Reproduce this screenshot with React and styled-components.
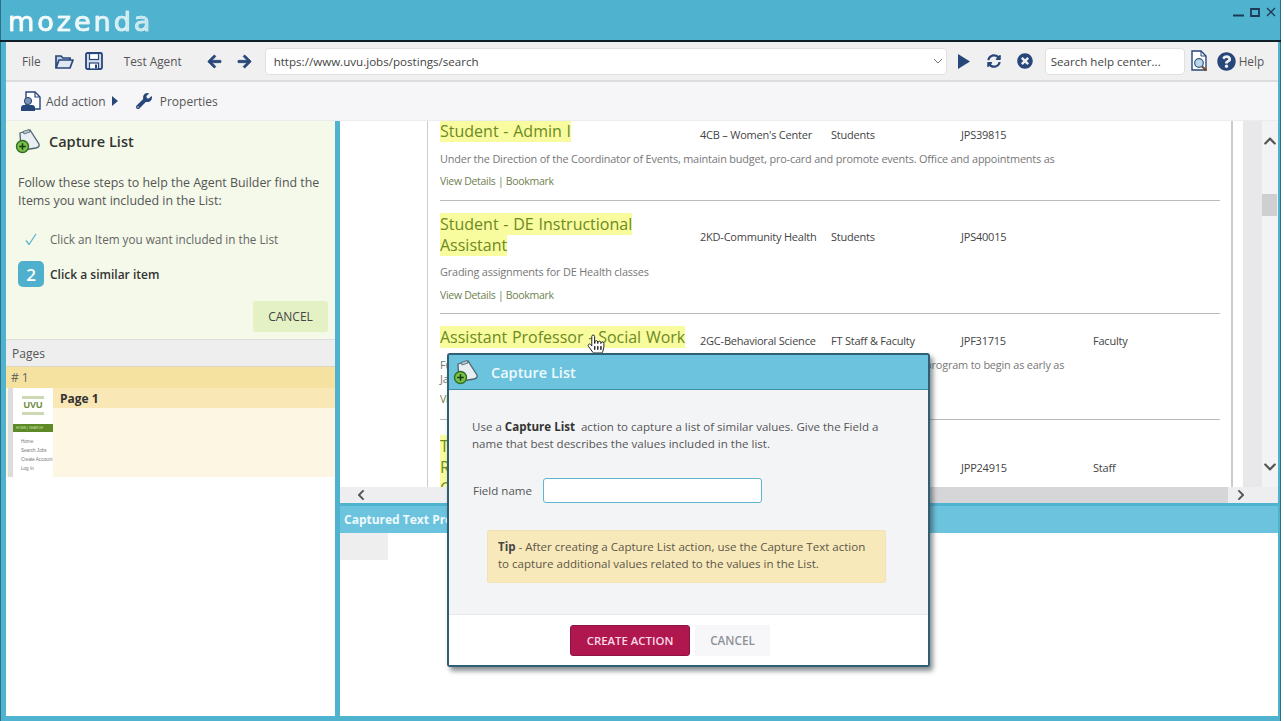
import React from 'react';
import styled, { createGlobalStyle } from 'styled-components';
import {
  FaArrowLeft, FaArrowRight, FaSyncAlt, FaTimesCircle,
  FaQuestionCircle, FaWrench, FaChevronUp, FaChevronDown, FaChevronLeft, FaChevronRight,
  FaHandPointer,
} from 'react-icons/fa';

const UI_FONT = `"Open Sans", "Noto Sans", sans-serif`;
const NAVY = '#27477a';

const Global = createGlobalStyle`
  html, body { margin: 0; padding: 0; background: #fff; }
  * { box-sizing: border-box; }
  body { font-family: ${UI_FONT}; }
`;

const Page = styled.div`
  width: 1284px;
  height: 721px;
  background: #fff;
`;

const Frame = styled.div`
  position: relative;
  width: 1281px;
  height: 721px;
  overflow: hidden;
  display: flex;
  flex-direction: column;
  padding: 0 3px 5px 6px;
  background: #4fb3cf;
  box-shadow: inset 1px 0 0 #2d6f86, inset -1px 0 0 #2d6f86;
  color: #444;
`;

const TitleBar = styled.div`
  flex: none;
  height: 42px;
  margin: 0 -3px 0 -6px;
  display: flex;
  align-items: flex-start;
  justify-content: space-between;
  padding: 5px 5px 0 8px;
  border-bottom: 2px solid #10202a;
`;

const Logo = styled.div`
  font: 400 27px "DejaVu Sans", sans-serif;
  letter-spacing: 3px;
  line-height: 34px;
  background: linear-gradient(90deg, #ffffff 0%, #e8f7fa 55%, #b5e0ea 100%);
  -webkit-background-clip: text;
  background-clip: text;
  color: transparent;
  -webkit-text-stroke: 0.7px rgba(255, 255, 255, 0.6);
`;

const WinControls = styled.div`
  display: flex;
  align-items: center;
  gap: 6px;
  height: 14px;
  color: #1d3a57;
`;

const Toolbar = styled.div`
  flex: none;
  height: 40px;
  display: flex;
  align-items: center;
  padding-left: 16px;
  background: #f0f0f1;
  border-bottom: 2px solid #dcdcdc;
  font-size: 11.8px;
`;

const ToolLabel = styled.span`
  margin-left: ${p => p.$left || 0}px;
  color: ${p => p.$color || '#555'};
  white-space: nowrap;
`;

const ToolIcon = styled.span`
  display: inline-flex;
  color: ${NAVY};
  margin-left: ${p => p.$left || 0}px;
  font-size: ${p => p.$size || 18}px;
`;

const ArrowIcon = styled(ToolIcon)`
  svg { stroke: currentColor; stroke-width: 25px; }
`;

const Field = styled.div`
  flex: none;
  width: ${p => p.$width}px;
  height: 27px;
  margin-left: ${p => p.$left}px;
  display: flex;
  align-items: center;
  justify-content: space-between;
  padding: 0 3px 0 ${p => p.$pad}px;
  background: #fff;
  border: 1px solid #e0e0e0;
  border-radius: 4px;
  font-size: 11.6px;
  color: #444;
`;

const ActionBar = styled.div`
  flex: none;
  height: 39px;
  display: flex;
  align-items: center;
  padding-left: 15px;
  background: #f6f6f8;
  font-size: 12px;
  color: #555;
  border-bottom: 1px solid #ececec;
`;

const Body = styled.div`
  flex: 1;
  min-height: 0;
  display: flex;
`;

const LeftColumn = styled.div`
  flex: none;
  width: 329px;
  display: flex;
  flex-direction: column;
  background: #fff;
`;

const Splitter = styled.div`
  flex: none;
  width: 5px;
  background: #4fb3cf;
`;

const GuidePanel = styled.div`
  flex: none;
  height: 218px;
  padding: 7px 7px 0 12px;
  background: #f4f9e9;
  display: flex;
  flex-direction: column;
`;

const GuideTitle = styled.div`
  display: flex;
  align-items: center;
  gap: 8px;
  margin-left: -3px;
  font-size: 14.5px;
  font-weight: 600;
  color: #333;
  height: 26px;
`;

const GuideText = styled.p`
  margin: 20px 0 0;
  font-size: 12.4px;
  line-height: 18px;
  color: #555;
`;

const Step = styled.div`
  display: flex;
  align-items: center;
  height: ${p => p.$height}px;
  margin-top: ${p => p.$top}px;
  font-size: ${p => (p.$bold ? 12 : 11.7)}px;
  color: ${p => (p.$bold ? '#333' : '#666')};
  font-weight: ${p => (p.$bold ? 600 : 400)};
`;

const StepMark = styled.span`
  flex: none;
  width: 26px;
  height: 26px;
  margin-right: 6px;
  display: flex;
  align-items: center;
  justify-content: center;
  border-radius: 5px;
  font-size: 17px;
  font-weight: 600;
  color: ${p => (p.$done ? '#5bb5cf' : '#fff')};
  background: ${p => (p.$done ? 'transparent' : '#4fb0cd')};
`;

const GuideCancel = styled.button`
  align-self: flex-end;
  margin-top: 14px;
  width: 75px;
  height: 31px;
  border: 0;
  border-radius: 3px;
  background: #e3f1c4;
  font: 500 12px ${UI_FONT};
  color: #444;
`;

const PagesHeader = styled.div`
  flex: none;
  height: 28px;
  display: flex;
  align-items: center;
  padding-left: 6px;
  background: #eeeeef;
  border-top: 1px solid #ddd;
  border-bottom: 1px solid #dfd8c0;
  font-size: 12px;
  color: #555;
`;

const GroupRow = styled.div`
  flex: none;
  height: 21px;
  display: flex;
  align-items: center;
  padding-left: 5px;
  background: #f6e2a0;
  font-size: 12px;
  color: #666;
`;

const PageRow = styled.div`
  flex: none;
  height: 89px;
  display: flex;
  background: #fdf6e3;
  padding-left: 2px;
`;

const Thumb = styled.div`
  flex: none;
  width: 45px;
  display: flex;
  flex-direction: column;
  background: #fff;
  border-left: 5px solid #dcdcdc;
  overflow: hidden;
`;

const ThumbLogo = styled.div`
  width: 22px;
  height: 20px;
  margin: 8px 0 0 9px;
  padding-top: 4px;
  font: 700 9px/10px "Liberation Sans", sans-serif;
  color: #6d8b3e;
  text-align: center;
  background: linear-gradient(#cdd8b4 0 3px, transparent 3px 16px, #cdd8b4 16px 19px, transparent 19px);
`;

const ThumbNav = styled.div`
  margin-top: 8px;
  height: 8px;
  background: #5d8a27;
  color: #cfe3ad;
  font: 3.4px/8px "Liberation Sans", sans-serif;
  padding-left: 3px;
  white-space: nowrap;
`;

const ThumbLinks = styled.div`
  margin: 5px 0 0 8px;
  font: 4.6px/9px "Liberation Sans", sans-serif;
  color: #777;
  white-space: nowrap;
`;

const PageName = styled.div`
  flex: 1;
  height: 20px;
  display: flex;
  align-items: center;
  padding-left: 7px;
  background: #f9e8b6;
  font-size: 12px;
  font-weight: 700;
  color: #333;
`;

const RightColumn = styled.div`
  flex: 1;
  min-width: 0;
  display: flex;
  flex-direction: column;
  background: #fff;
`;

const BrowserRow = styled.div`
  flex: none;
  height: 366px;
  display: flex;
`;

const Viewport = styled.div`
  flex: 1;
  min-width: 0;
  overflow: hidden;
`;

const JobList = styled.div`
  width: 806px;
  height: 366px;
  margin-left: 87px;
  padding: 0 11px 0 12px;
  border-left: 1px solid #ccc;
  border-right: 2px solid #ccc;
  overflow: hidden;
`;

const Job = styled.div`
  height: ${p => p.$height}px;
  padding-top: ${p => p.$pad}px;
  border-bottom: 1px solid #bbb;
  &:last-child { border-bottom: 0; }
`;

const JobHead = styled.div`
  display: grid;
  grid-template-columns: 260px 131px 130px 132px 1fr;
  align-items: center;
  font-size: 11px;
  letter-spacing: -0.22px;
  color: #444;
  > div + div { padding-top: ${p => p.$metaOffset ?? 5}px; }
`;

const JobTitle = styled.div`
  font-size: 16px;
  word-spacing: 0.6px;
  letter-spacing: 0;
  line-height: 21px;
  color: #6c8a22;
  white-space: ${p => (p.$nowrap ? 'nowrap' : 'normal')};
  span {
    background: #f9fb9f;
    box-decoration-break: clone;
    -webkit-box-decoration-break: clone;
  }
`;

const JobDesc = styled.div`
  margin-top: ${p => p.$top}px;
  font-size: 10.9px;
  letter-spacing: -0.18px;
  line-height: ${p => p.$line || 17}px;
  color: #777;
  white-space: nowrap;
`;

const JobLinks = styled.div`
  margin-top: ${p => p.$top}px;
  font-size: 10.5px;
  letter-spacing: -0.3px;
  line-height: 15px;
  color: #6f7f50;
`;

const VScroll = styled.div`
  flex: none;
  width: 35px;
  display: flex;
  flex-direction: column;
  align-items: flex-end;
  margin-left: 10px;
  background: linear-gradient(90deg, #e8e8ea 0 19px, #f3f3f5 19px);
  color: #555;
  font-size: 14px;
  padding: 13px 1px 0 0;
`;

const VThumb = styled.div`
  width: 15px;
  height: 22px;
  margin-top: 46px;
  background: #cfcfd2;
`;

const VDown = styled.div`
  margin-top: auto;
  padding-bottom: 13px;
  display: flex;
`;

const HScroll = styled.div`
  flex: none;
  height: 16px;
  display: flex;
  align-items: center;
  padding: 0 31px 0 15px;
  background: #eeeef0;
  color: #555;
  font-size: 12px;
`;

const HThumb = styled.div`
  flex: 1;
  align-self: stretch;
  margin: 0 7px 0 110px;
  background: #d6d6d8;
`;

const PreviewBar = styled.div`
  flex: none;
  height: 30px;
  padding-left: 4px;
  display: flex;
  align-items: center;
  background: #6cc3de;
  border-top: 3px solid #4fb3cf;
  font-size: 12px;
  font-weight: 700;
  color: #eef9fc;
`;

const PreviewCell = styled.div`
  width: 48px;
  height: 27px;
  background: #eeeeef;
`;

const Modal = styled.div`
  position: absolute;
  left: 447px;
  top: 353px;
  width: 483px;
  height: 314px;
  display: flex;
  flex-direction: column;
  background: #f3f4f6;
  border: 2px solid #2f5f72;
  border-radius: 3px;
  box-shadow: 3px 4px 5px rgba(40, 50, 55, 0.55);
`;

const ModalHead = styled.div`
  flex: none;
  height: 35px;
  display: flex;
  align-items: center;
  gap: 12px;
  padding-left: 4px;
  background: #6cc3de;
  border-bottom: 1px solid #3f8ea8;
  font-size: 14.5px;
  font-weight: 600;
  color: #eefafd;
`;

const ModalBody = styled.div`
  flex: 1;
  padding: 28px 23px 0;
  font-size: 11.55px;
  line-height: 17px;
  color: #555;
  b { color: #333; font-weight: 700; }
`;

const FieldRow = styled.div`
  display: flex;
  align-items: center;
  gap: 11px;
  margin: 26px 0 0 1px;
`;

const FieldInput = styled.input`
  width: 219px;
  height: 25px;
  border: 1px solid #5fb4cf;
  border-radius: 3px;
  background: #fff;
  outline: 0;
`;

const Tip = styled.div`
  margin: 27px 19px 0 15px;
  height: 53px;
  padding: 7px 6px 7px 10px;
  background: #f8e9ba;
  border: 1px solid #f2e3b4;
  border-radius: 2px;
  color: #5b5648;
  b { color: #444; }
`;

const ModalFoot = styled.div`
  flex: none;
  height: 51px;
  display: flex;
  align-items: center;
  padding: 0 0 0 121px;
  gap: 5px;
  background: #fff;
  border-top: 1px solid #e8e8e8;
`;

const PrimaryButton = styled.button`
  width: 120px;
  height: 31px;
  border: 1px solid #8e1347;
  border-radius: 3px;
  background: #b0174f;
  color: #fbd9e6;
  font: 600 11.4px ${UI_FONT};
`;

const GhostButton = styled.button`
  width: 75px;
  height: 31px;
  border: 0;
  background: #f7f7f9;
  color: #8d9198;
  font: 600 11.7px ${UI_FONT};
`;

const Cursor = styled.div`
  position: absolute;
  left: 587px;
  top: 335px;
  color: #fff;
  font-size: 18px;
  display: flex;
  svg { stroke: #222; stroke-width: 28px; overflow: visible; }
`;

const CaptureIcon = ({ size = 26 }) => (
  <svg width={size} height={size} viewBox="0 0 26 26">
    <path d="M5 5 L15 2 L24 16 Q25 19 21 20 L9 22 Q5 16 5 5Z" fill="#e8eef2" stroke="#4d6470" strokeWidth="1.3" />
    <path d="M8 3.5 L14 1.5 L15 4 L9 6Z" fill="#b9c6cc" stroke="#4d6470" strokeWidth="0.8" />
    <circle cx="7.5" cy="18.5" r="6" fill="#7cc04a" stroke="#2f6d22" strokeWidth="1.4" />
    <path d="M7.5 15.2v6.6M4.2 18.5h6.6" stroke="#123d12" strokeWidth="1.5" />
  </svg>
);

const AddActionIcon = () => (
  <svg width="20" height="20" viewBox="0 0 20 20">
    <path d="M5 1h9l5 5v12H5z" fill="#fff" stroke={NAVY} strokeWidth="1.4" />
    <path d="M14 1v5h5" fill="none" stroke={NAVY} strokeWidth="1.2" />
    <circle cx="7" cy="10" r="3.6" fill="#7d93b5" stroke={NAVY} />
    <path d="M0 20v-3q0-3 3-3h8q3 0 3 3v3z" fill={NAVY} />
  </svg>
);

const PageSearchIcon = () => (
  <svg width="17" height="22" viewBox="0 0 17 22">
    <path d="M1 1h9l5 5v14H1z" fill="#fff" stroke={NAVY} strokeWidth="1.4" />
    <path d="M10 1v5h5" fill="none" stroke={NAVY} />
    <circle cx="8" cy="13" r="4.3" fill="#bcd7ea" stroke="#35557f" strokeWidth="1.2" />
    <path d="M11 16.5l4.5 4" stroke="#7a4a1e" strokeWidth="2.2" />
  </svg>
);

const FolderIcon = () => (
  <svg width="19" height="15" viewBox="0 0 19 15">
    <path d="M1 14V2h5l2 2h7v2" fill="#c6d3e6" stroke={NAVY} strokeWidth="1.7" />
    <path d="M1 14l3-8h14l-3 8z" fill="#dfe7f2" stroke={NAVY} strokeWidth="1.7" strokeLinejoin="round" />
  </svg>
);

const FloppyIcon = () => (
  <svg width="18" height="18" viewBox="0 0 18 18">
    <rect x="1" y="1" width="16" height="16" rx="1.5" fill="#d5deec" stroke={NAVY} strokeWidth="1.8" />
    <rect x="4.5" y="1.5" width="9" height="6" fill="#fff" stroke={NAVY} strokeWidth="1.2" />
    <rect x="4.5" y="11" width="9" height="6" fill="#fff" stroke={NAVY} strokeWidth="1.2" />
    <rect x="10" y="12.5" width="2" height="4" fill={NAVY} />
  </svg>
);

const CheckIcon = () => (
  <svg width="12" height="13" viewBox="0 0 12 13">
    <path d="M1 7.5l3 4L11 1" fill="none" stroke="currentColor" strokeWidth="1.3" />
  </svg>
);

const App = () => (
  <Page>
    <Global />
    <Frame>
      <TitleBar>
        <Logo>mozenda</Logo>
        <WinControls>
          <svg width="11" height="10" viewBox="0 0 11 10"><path d="M0 8.5h11" stroke="currentColor" strokeWidth="2" /></svg>
          <svg width="10" height="10" viewBox="0 0 10 10"><path d="M1 2h8v7H1z" fill="none" stroke="currentColor" strokeWidth="1.8" /></svg>
          <svg width="10" height="10" viewBox="0 0 10 10"><path d="M1 1l8 8M9 1l-8 8" stroke="currentColor" strokeWidth="1.3" /></svg>
        </WinControls>
      </TitleBar>

      <Toolbar>
        <ToolLabel>File</ToolLabel>
        <ToolIcon $left={14}><FolderIcon /></ToolIcon>
        <ToolIcon $left={11}><FloppyIcon /></ToolIcon>
        <ToolLabel $left={21}>Test Agent</ToolLabel>
        <ArrowIcon $left={25} $size={15}><FaArrowLeft /></ArrowIcon>
        <ArrowIcon $left={15} $size={15}><FaArrowRight /></ArrowIcon>
        <Field $width={682} $left={13} $pad={8}>
          https://www.uvu.jobs/postings/search
          <svg width="10" height="6" viewBox="0 0 10 6"><path d="M1 1l4 4 4-4" fill="none" stroke="#777" /></svg>
        </Field>
        <ToolIcon $left={11} $size={14}>
          <svg width="12" height="15" viewBox="0 0 12 15"><path d="M0 0l12 7.5L0 15z" fill="currentColor" /></svg>
        </ToolIcon>
        <ToolIcon $left={17} $size={14}><FaSyncAlt /></ToolIcon>
        <ToolIcon $left={16} $size={16}><FaTimesCircle /></ToolIcon>
        <Field $width={140} $left={12} $pad={5}>Search help center...</Field>
        <ToolIcon $left={6}><PageSearchIcon /></ToolIcon>
        <ToolIcon $left={9} $size={19}><FaQuestionCircle /></ToolIcon>
        <ToolLabel $left={3}>Help</ToolLabel>
      </Toolbar>

      <ActionBar>
        <AddActionIcon />
        <ToolLabel $left={5}>Add action</ToolLabel>
        <ToolIcon $left={6}>
          <svg width="6" height="10" viewBox="0 0 6 10"><path d="M0 0l6 5-6 5z" fill="currentColor" /></svg>
        </ToolIcon>
        <ToolIcon $left={18} $size={16}><FaWrench /></ToolIcon>
        <ToolLabel $left={8}>Properties</ToolLabel>
      </ActionBar>

      <Body>
        <LeftColumn>
          <GuidePanel>
            <GuideTitle><CaptureIcon />Capture List</GuideTitle>
            <GuideText>Follow these steps to help the Agent Builder find the Items you want included in the List:</GuideText>
            <Step $height={20} $top={19}>
              <StepMark $done><CheckIcon /></StepMark>
              Click an Item you want included in the List
            </Step>
            <Step $height={26} $top={12} $bold>
              <StepMark>2</StepMark>
              Click a similar item
            </Step>
            <GuideCancel>CANCEL</GuideCancel>
          </GuidePanel>
          <PagesHeader>Pages</PagesHeader>
          <GroupRow># 1</GroupRow>
          <PageRow>
            <Thumb>
              <ThumbLogo>UVU</ThumbLogo>
              <ThumbNav>HOME | SEARCH</ThumbNav>
              <ThumbLinks>
                <div>Home</div>
                <div>Search Jobs</div>
                <div>Create Account</div>
                <div>Log In</div>
              </ThumbLinks>
            </Thumb>
            <PageName>Page 1</PageName>
          </PageRow>
        </LeftColumn>
        <Splitter />
        <RightColumn>
          <BrowserRow>
            <Viewport>
              <JobList>
                <Job $height={80} $pad={0}>
                  <JobHead>
                    <JobTitle><span>Student - Admin I</span></JobTitle>
                    <div>4CB – Women's Center</div>
                    <div>Students</div>
                    <div>JPS39815</div>
                    <div />
                  </JobHead>
                  <JobDesc $top={8}>Under the Direction of the Coordinator of Events, maintain budget, pro-card and promote events. Office and appointments as</JobDesc>
                  <JobLinks $top={7}>View Details | Bookmark</JobLinks>
                </Job>
                <Job $height={113} $pad={13}>
                  <JobHead $metaOffset={3}>
                    <JobTitle><span>Student - DE Instructional Assistant</span></JobTitle>
                    <div>2KD-Community Health</div>
                    <div>Students</div>
                    <div>JPS40015</div>
                    <div />
                  </JobHead>
                  <JobDesc $top={7}>Grading assignments for DE Health classes</JobDesc>
                  <JobLinks $top={8}>View Details | Bookmark</JobLinks>
                </Job>
                <Job $height={106} $pad={13}>
                  <JobHead>
                    <JobTitle $nowrap><span>Assistant Professor - Social Work</span></JobTitle>
                    <div>2GC-Behavioral Science</div>
                    <div>FT Staff &amp; Faculty</div>
                    <div>JPF31715</div>
                    <div>Faculty</div>
                  </JobHead>
                  <JobDesc $top={10} $line={14}>
                    Full-time faculty position in the Department of Social Work, teaching classes for the new BSW/MSW program to begin as early as<br />
                    January
                  </JobDesc>
                  <JobLinks $top={6}>View Details | Bookmark</JobLinks>
                </Job>
                <Job $height={67} $pad={16}>
                  <JobHead $metaOffset={0}>
                    <JobTitle>
                      <span>Technology Specialist</span><br />
                      <span>Research Computing</span><br />
                      <span>Center</span>
                    </JobTitle>
                    <div />
                    <div />
                    <div>JPP24915</div>
                    <div>Staff</div>
                  </JobHead>
                </Job>
              </JobList>
            </Viewport>
            <VScroll>
              <FaChevronUp />
              <VThumb />
              <VDown><FaChevronDown /></VDown>
            </VScroll>
          </BrowserRow>
          <HScroll><FaChevronLeft /><HThumb /><FaChevronRight /></HScroll>
          <PreviewBar>Captured Text Preview</PreviewBar>
          <PreviewCell />
        </RightColumn>
      </Body>

      <Cursor><FaHandPointer /></Cursor>

      <Modal>
        <ModalHead><CaptureIcon />Capture List</ModalHead>
        <ModalBody>
          Use a <b>Capture List</b>&nbsp; action to capture a list of similar values. Give the Field a name that best describes the values included in the list.
          <FieldRow>Field name<FieldInput /></FieldRow>
          <Tip><b>Tip</b> - After creating a Capture List action, use the Capture Text action to capture additional values related to the values in the List.</Tip>
        </ModalBody>
        <ModalFoot>
          <PrimaryButton>CREATE ACTION</PrimaryButton>
          <GhostButton>CANCEL</GhostButton>
        </ModalFoot>
      </Modal>
    </Frame>
  </Page>
);

export default App;
